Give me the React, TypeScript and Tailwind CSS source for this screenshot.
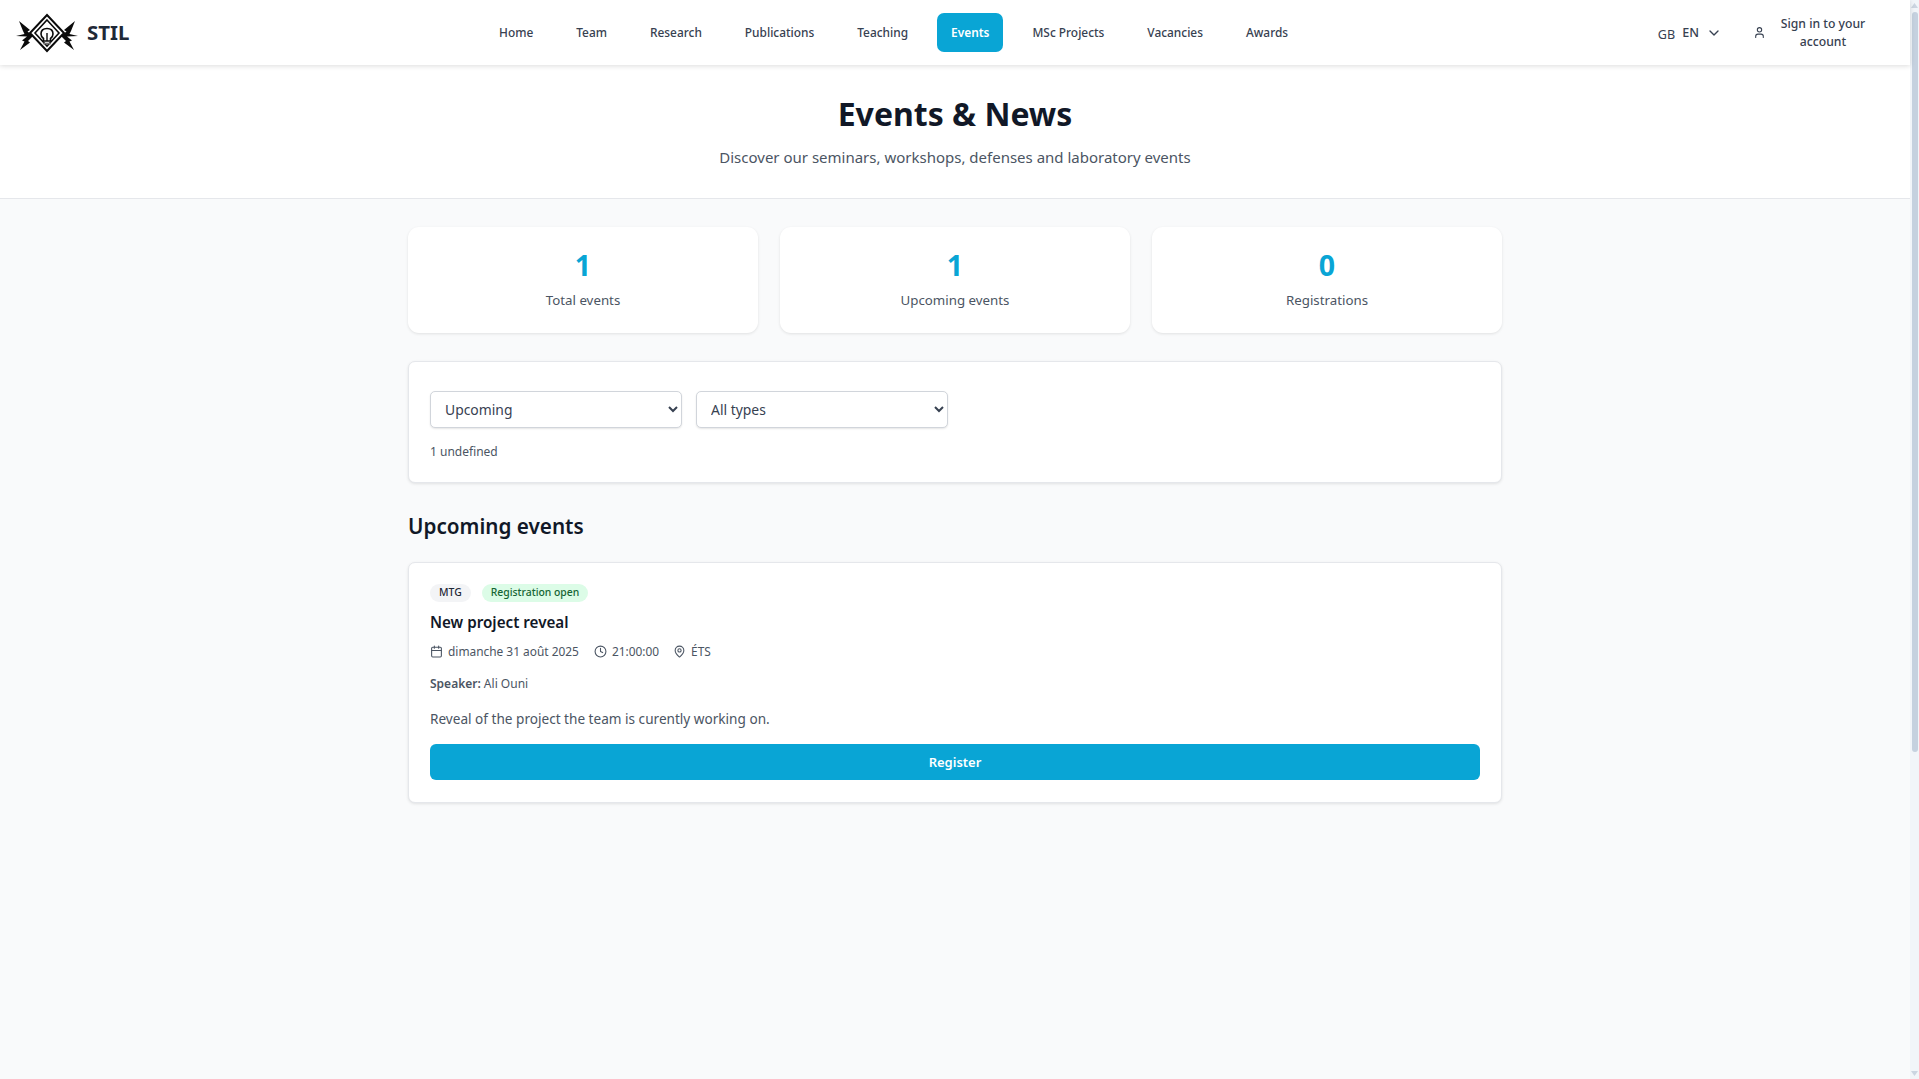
import { Calendar, ChevronDown, Clock, MapPin, User } from "lucide-react";

const navItems = [
  "Home",
  "Team",
  "Research",
  "Publications",
  "Teaching",
  "Events",
  "MSc Projects",
  "Vacancies",
  "Awards",
];

const stats = [
  { value: "1", label: "Total events" },
  { value: "1", label: "Upcoming events" },
  { value: "0", label: "Registrations" },
];

function Logo() {
  return (
    <svg width="64" height="40" viewBox="0 0 64 40" className="shrink-0" aria-label="STIL logo">
      {/* diamond frame */}
      <path d="M32 2 L49 20 L32 38 L15 20 Z" fill="none" stroke="#0b0b0b" strokeWidth="2" />
      <path d="M32 7 L44 20 L32 33 L20 20 Z" fill="none" stroke="#0b0b0b" strokeWidth="1.6" />
      {/* bulb */}
      <path
        d="M28.5 28 L28.5 25.5 C26.5 24 26 22.5 26 21 C26 17.5 28.5 15.5 32 15.5 C35.5 15.5 38 17.5 38 21 C38 22.5 37.5 24 35.5 25.5 L35.5 28 Z"
        fill="#fff"
        stroke="#0b0b0b"
        strokeWidth="1.6"
      />
      <path d="M32 20 V28" stroke="#0b0b0b" strokeWidth="1.4" />
      <path d="M28 30.5 H36" stroke="#777" strokeWidth="1.6" />
      {/* wings */}
      <path
        d="M4 8 L15 17 L12.5 18.5 L18 23 L13 28 L15 29.5 L5 37 L9.5 28.5 L7 27.5 L12 23.5 L1 23 L9.5 21 L8 18 Z"
        fill="#0b0b0b"
      />
      <path
        d="M60 8 L49 17 L51.5 18.5 L46 23 L51 28 L49 29.5 L59 37 L54.5 28.5 L57 27.5 L52 23.5 L63 23 L54.5 21 L56 18 Z"
        fill="#0b0b0b"
      />
    </svg>
  );
}

function Header() {
  return (
    <header className="relative z-10 flex h-[65px] items-center bg-white pl-[15px] shadow-[0_1px_5px_rgba(0,0,0,0.14)]">
      <div className="flex w-[470px] items-center gap-[8px]">
        <Logo />
        <span className="text-[20.4px] font-bold leading-none text-[#1f2937]">STIL</span>
      </div>
      <nav className="flex items-center gap-[15px]">
        {navItems.map((item) =>
          item === "Events" ? (
            <a
              key={item}
              className="flex h-[39px] items-center rounded-[7px] bg-[#09a5d5] px-[14px] pt-[1px] text-[11.9px] font-semibold text-white"
            >
              {item}
            </a>
          ) : (
            <a
              key={item}
              className="flex h-[39px] items-center px-[14px] pt-[1px] text-[11.9px] font-medium text-[#374151]"
            >
              {item}
            </a>
          )
        )}
      </nav>
      <div className="ml-auto flex items-center pr-[42px]">
        <span className="mt-[5px] text-[12.6px] text-[#374151]">GB</span>
        <span className="ml-[7px] pt-[1px] text-[12.6px] font-medium text-[#374151]">EN</span>
        <ChevronDown className="ml-[7px] h-[16px] w-[16px] text-[#374151]" strokeWidth={2} />
        <User className="ml-[31px] h-[13px] w-[13px] text-[#374151]" strokeWidth={2} />
        <span className="ml-[12px] w-[90px] text-center text-[12.2px] font-medium leading-[17.5px] text-[#374151]">
          Sign in to your account
        </span>
      </div>
    </header>
  );
}

function Hero() {
  return (
    <section className="flex h-[134px] flex-col items-center border-b border-[#e5e7eb] bg-white pt-[27px]">
      <h1 className="text-[32px] font-bold leading-[44px] text-[#111827]">Events &amp; News</h1>
      <p className="mt-[9px] text-[15px] leading-[24px] text-[#4b5563]">
        Discover our seminars, workshops, defenses and laboratory events
      </p>
    </section>
  );
}

function StatCards() {
  return (
    <div className="grid grid-cols-3 gap-[22px]">
      {stats.map((s) => (
        <div
          key={s.label}
          className="flex h-[106px] flex-col items-center rounded-[11px] bg-white pt-[19px] shadow-[0_1px_3px_rgba(0,0,0,0.1)]"
        >
          <div className="text-[28.5px] font-bold leading-[38px] text-[#09a5d5]">{s.value}</div>
          <div className="mt-[6px] text-[13.3px] leading-[20px] text-[#4b5563]">{s.label}</div>
        </div>
      ))}
    </div>
  );
}

function Filters() {
  const selectClass =
    "h-[37px] w-[252px] rounded-[5px] border border-[#d1d5db] bg-white pl-[10px] pr-[2px] text-[13.9px] text-[#374151] shadow-[0_1px_2px_rgba(0,0,0,0.1)]";
  return (
    <div className="mt-[28px] h-[122px] rounded-[7px] border border-[#e5e7eb] bg-white pl-[21px] pt-[29px] shadow-[0_1px_3px_rgba(0,0,0,0.1)]">
      <div className="flex gap-[14px]">
        <select className={selectClass} defaultValue="Upcoming">
          <option>Upcoming</option>
          <option>Past</option>
        </select>
        <select className={selectClass} defaultValue="All types">
          <option>All types</option>
        </select>
      </div>
      <div className="mt-[15px] text-[12px] leading-[18px] text-[#4b5563]">1 undefined</div>
    </div>
  );
}

function EventCard() {
  return (
    <div className="mt-[21px] h-[241px] rounded-[7px] border border-[#e5e7eb] bg-white px-[21px] pt-[21px] shadow-[0_1px_3px_rgba(0,0,0,0.1)]">
      <div className="flex gap-[11px]">
        <span className="flex h-[18px] items-center rounded-full bg-[#f3f4f6] px-[9px] text-[10.4px] font-medium text-[#1f2937]">
          MTG
        </span>
        <span className="flex h-[18px] items-center rounded-full bg-[#dcfce7] px-[9px] text-[10.4px] font-medium text-[#166534]">
          Registration open
        </span>
      </div>
      <h3 className="mt-[8px] text-[15.2px] font-semibold leading-[24px] text-[#111827]">New project reveal</h3>
      <div className="mt-[8px] flex items-center text-[11.9px] leading-[18px] text-[#4b5563]">
        <Calendar className="h-[13px] w-[13px]" strokeWidth={2} />
        <span className="ml-[5px]">dimanche 31 août 2025</span>
        <Clock className="ml-[15px] h-[13px] w-[13px]" strokeWidth={2} />
        <span className="ml-[5px]">21:00:00</span>
        <MapPin className="ml-[14px] h-[13px] w-[13px]" strokeWidth={2} />
        <span className="ml-[5px]">ÉTS</span>
      </div>
      <div className="mt-[15px] text-[12px] leading-[18px] text-[#4b5563]">
        <span className="font-semibold">Speaker:</span> Ali Ouni
      </div>
      <p className="mt-[16px] text-[13.6px] leading-[20px] text-[#4b5563]">
        Reveal of the project the team is curently working on.
      </p>
      <button className="mt-[15px] flex h-[36px] w-full items-center justify-center rounded-[6px] bg-[#09a5d5] pt-[1px] text-[13px] font-semibold text-white">
        Register
      </button>
    </div>
  );
}

function Scrollbar() {
  return (
    <div className="flex w-[9px] shrink-0 flex-col items-center bg-[#f1f5f9]">
      <svg width="7" height="5" viewBox="0 0 7 5" className="mt-[3px] shrink-0">
        <path d="M3.5 0 L7 5 H0 Z" fill="#cbd5e1" />
      </svg>
      <div className="mt-[4px] h-[740px] w-[6px] rounded-[3px] bg-[#c5d1df]" />
      <svg width="7" height="5" viewBox="0 0 7 5" className="mb-[3px] mt-auto shrink-0">
        <path d="M0 0 H7 L3.5 5 Z" fill="#cbd5e1" />
      </svg>
    </div>
  );
}

export default function App() {
  return (
    <div className="flex h-[1079px] overflow-hidden bg-[#f9fafb] font-['Noto_Sans','Open_Sans',sans-serif]">
      <div className="min-w-0 flex-1">
        <Header />
        <Hero />
        <main className="mx-auto w-[1094px] pt-[28px]">
          <StatCards />
          <Filters />
          <h2 className="mt-[28px] text-[20.7px] font-semibold leading-[30px] text-[#111827]">Upcoming events</h2>
          <EventCard />
        </main>
      </div>
      <Scrollbar />
    </div>
  );
}
